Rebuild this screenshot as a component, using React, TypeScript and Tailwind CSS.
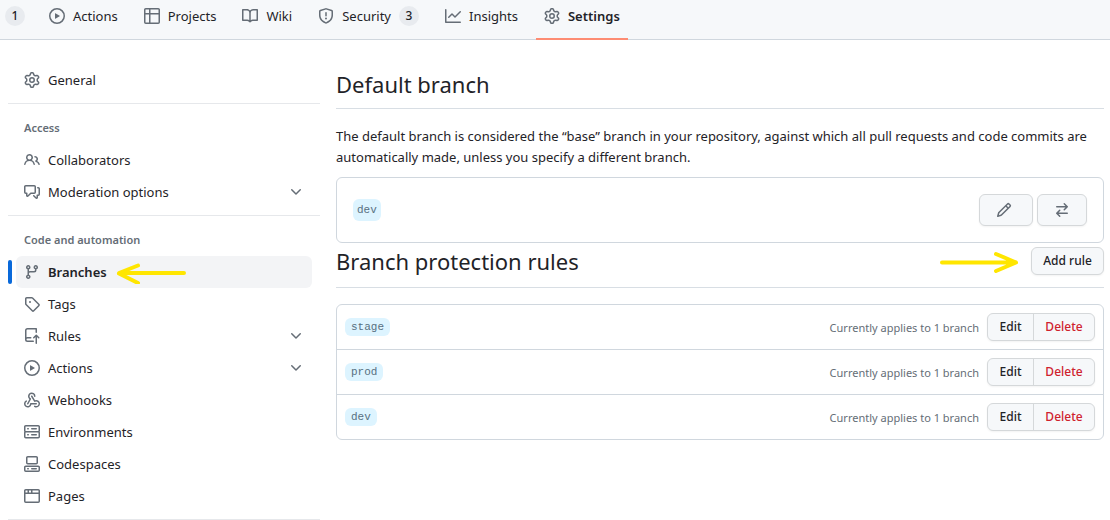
import type { ReactNode } from "react";

const icons = {
  play: "M8 0a8 8 0 1 1 0 16A8 8 0 0 1 8 0ZM1.5 8a6.5 6.5 0 1 0 13 0 6.5 6.5 0 0 0-13 0Zm4.879-2.773 4.264 2.559a.25.25 0 0 1 0 .428l-4.264 2.559A.25.25 0 0 1 6 10.559V5.442a.25.25 0 0 1 .379-.215Z",
  table: "M0 1.75C0 .784.784 0 1.75 0h12.5C15.216 0 16 .784 16 1.75v12.5A1.75 1.75 0 0 1 14.25 16H1.75A1.75 1.75 0 0 1 0 14.25ZM6.5 6.5v8h7.75a.25.25 0 0 0 .25-.25V6.5Zm8-1.5V1.75a.25.25 0 0 0-.25-.25H6.5V5Zm-13 1.5v7.75c0 .138.112.25.25.25H5v-8ZM5 5V1.5H1.75a.25.25 0 0 0-.25.25V5Z",
  book: "M0 1.75A.75.75 0 0 1 .75 1h4.253c1.227 0 2.317.59 3 1.501A3.743 3.743 0 0 1 11.006 1h4.245a.75.75 0 0 1 .75.75v10.5a.75.75 0 0 1-.75.75h-4.507a2.25 2.25 0 0 0-1.591.659l-.622.621a.75.75 0 0 1-1.06 0l-.622-.621A2.25 2.25 0 0 0 5.258 13H.75a.75.75 0 0 1-.75-.75Zm7.251 10.324.004-5.073-.002-2.253A2.25 2.25 0 0 0 5.003 2.5H1.5v9h3.757a3.75 3.75 0 0 1 1.994.574ZM8.755 4.75l-.004 7.322a3.752 3.752 0 0 1 1.992-.572H14.5v-9h-3.495a2.25 2.25 0 0 0-2.25 2.25Z",
  shield: "M7.467.133a1.748 1.748 0 0 1 1.066 0l5.25 1.68A1.75 1.75 0 0 1 15 3.48V7c0 1.566-.32 3.182-1.303 4.682-.983 1.498-2.585 2.813-5.032 3.855a1.697 1.697 0 0 1-1.33 0c-2.447-1.042-4.049-2.357-5.032-3.855C1.32 10.182 1 8.566 1 7V3.48a1.75 1.75 0 0 1 1.217-1.667Zm.61 1.429a.25.25 0 0 0-.153 0l-5.25 1.68a.25.25 0 0 0-.174.238V7c0 1.358.275 2.666 1.057 3.86.784 1.194 2.121 2.34 4.366 3.297a.196.196 0 0 0 .154 0c2.245-.956 3.582-2.104 4.366-3.298C13.225 9.666 13.5 8.36 13.5 7V3.48a.251.251 0 0 0-.174-.237l-5.25-1.68ZM8.75 4.75v3a.75.75 0 0 1-1.5 0v-3a.75.75 0 0 1 1.5 0ZM9 10.5a1 1 0 1 1-2 0 1 1 0 0 1 2 0Z",
  graph: "M1.5 1.75V13.5h13.75a.75.75 0 0 1 0 1.5H.75a.75.75 0 0 1-.75-.75V1.75a.75.75 0 0 1 1.5 0Zm14.28 2.53-5.25 5.25a.75.75 0 0 1-1.06 0L7 7.06 4.28 9.78a.751.751 0 0 1-1.042-.018.751.751 0 0 1-.018-1.042l3.25-3.25a.75.75 0 0 1 1.06 0L10 7.94l4.72-4.72a.751.751 0 0 1 1.042.018.751.751 0 0 1 .018 1.042Z",
  gear: "M8 0a8.2 8.2 0 0 1 .701.031C9.444.095 9.99.645 10.16 1.29l.288 1.107c.018.066.079.158.212.224.231.114.454.243.668.386.123.082.233.09.299.071l1.103-.303c.644-.176 1.392.021 1.82.63.27.385.506.792.704 1.218.315.675.111 1.422-.364 1.891l-.814.806c-.049.048-.098.147-.088.294.016.257.016.515 0 .772-.01.147.038.246.088.294l.814.806c.475.469.679 1.216.364 1.891a7.977 7.977 0 0 1-.704 1.217c-.428.61-1.176.807-1.82.63l-1.102-.302c-.067-.019-.177-.011-.3.071a5.909 5.909 0 0 1-.668.386c-.133.066-.194.158-.211.224l-.29 1.106c-.168.646-.715 1.196-1.458 1.26a8.006 8.006 0 0 1-1.402 0c-.743-.064-1.289-.614-1.458-1.26l-.289-1.106c-.018-.066-.079-.158-.212-.224a5.738 5.738 0 0 1-.668-.386c-.123-.082-.233-.09-.299-.071l-1.103.303c-.644.176-1.392-.021-1.82-.63a8.12 8.12 0 0 1-.704-1.218c-.315-.675-.111-1.422.363-1.891l.815-.806c.05-.048.098-.147.088-.294a6.214 6.214 0 0 1 0-.772c.01-.147-.038-.246-.088-.294l-.815-.806C.635 6.045.431 5.298.746 4.623a7.92 7.92 0 0 1 .704-1.217c.428-.61 1.176-.807 1.82-.63l1.102.302c.067.019.177.011.3-.071.214-.143.437-.272.668-.386.133-.066.194-.158.211-.224l.29-1.106C6.009.645 6.556.095 7.299.03 7.53.01 7.764 0 8 0Zm-.571 1.525c-.036.003-.108.036-.137.146l-.289 1.105c-.147.561-.549.967-.998 1.189-.173.086-.34.183-.5.29-.417.278-.97.423-1.529.27l-1.103-.303c-.109-.03-.175.016-.195.045-.22.312-.412.644-.573.99-.014.031-.021.11.059.19l.815.806c.411.406.562.957.53 1.456a4.709 4.709 0 0 0 0 .582c.032.499-.119 1.05-.53 1.456l-.815.806c-.081.08-.073.159-.059.19.162.346.353.677.573.989.02.03.085.076.195.046l1.102-.303c.56-.153 1.113-.008 1.53.27.161.107.328.204.501.29.447.222.85.629.997 1.189l.289 1.105c.029.109.101.143.137.146a6.6 6.6 0 0 0 1.142 0c.036-.003.108-.036.137-.146l.289-1.105c.147-.561.549-.967.998-1.189.173-.086.34-.183.5-.29.417-.278.97-.423 1.529-.27l1.103.303c.109.029.175-.016.195-.045.22-.313.411-.644.573-.99.014-.031.021-.11-.059-.19l-.815-.806c-.411-.406-.562-.957-.53-1.456a4.709 4.709 0 0 0 0-.582c-.032-.499.119-1.05.53-1.456l.815-.806c.081-.08.073-.159.059-.19a6.464 6.464 0 0 0-.573-.989c-.02-.03-.085-.076-.195-.046l-1.102.303c-.56.153-1.113.008-1.53-.27a4.44 4.44 0 0 0-.501-.29c-.447-.222-.85-.629-.997-1.189l-.289-1.105c-.029-.11-.101-.143-.137-.146a6.6 6.6 0 0 0-1.142 0ZM11 8a3 3 0 1 1-6 0 3 3 0 0 1 6 0ZM9.5 8a1.5 1.5 0 1 0-3.001.001A1.5 1.5 0 0 0 9.5 8Z",
  people: "M2 5.5a3.5 3.5 0 1 1 5.898 2.549 5.508 5.508 0 0 1 3.034 4.084.75.75 0 1 1-1.482.235 4 4 0 0 0-7.9 0 .75.75 0 0 1-1.482-.236A5.507 5.507 0 0 1 3.102 8.05 3.493 3.493 0 0 1 2 5.5ZM11 4a3.001 3.001 0 0 1 2.22 5.018 5.01 5.01 0 0 1 2.56 3.012.749.749 0 0 1-.885.954.752.752 0 0 1-.549-.514 3.507 3.507 0 0 0-2.522-2.372.75.75 0 0 1-.574-.73v-.352a.75.75 0 0 1 .416-.672A1.5 1.5 0 0 0 11 5.5.75.75 0 0 1 11 4Zm-5.5-.5a2 2 0 1 0-.001 3.999A2 2 0 0 0 5.5 3.5Z",
  discussion: "M1.75 1h8.5c.966 0 1.75.784 1.75 1.75v5.5A1.75 1.75 0 0 1 10.25 10H7.061l-2.574 2.573A1.458 1.458 0 0 1 2 11.543V10h-.25A1.75 1.75 0 0 1 0 8.25v-5.5C0 1.784.784 1 1.75 1ZM1.5 2.75v5.5c0 .138.112.25.25.25h1a.75.75 0 0 1 .75.75v2.19l2.72-2.72a.749.749 0 0 1 .53-.22h3.5a.25.25 0 0 0 .25-.25v-5.5a.25.25 0 0 0-.25-.25h-8.5a.25.25 0 0 0-.25.25Zm13 2a.25.25 0 0 0-.25-.25h-.5a.75.75 0 0 1 0-1.5h.5c.966 0 1.75.784 1.75 1.75v5.5A1.75 1.75 0 0 1 14.25 12H14v1.543a1.458 1.458 0 0 1-2.487 1.03L9.22 12.28a.749.749 0 0 1 .326-1.275.749.749 0 0 1 .734.215l2.22 2.22v-2.19a.75.75 0 0 1 .75-.75h1a.25.25 0 0 0 .25-.25Z",
  branch: "M9.5 3.25a2.25 2.25 0 1 1 3 2.122V6A2.5 2.5 0 0 1 10 8.5H6a1 1 0 0 0-1 1v1.128a2.251 2.251 0 1 1-1.5 0V5.372a2.25 2.25 0 1 1 1.5 0v1.836A2.493 2.493 0 0 1 6 7h4a1 1 0 0 0 1-1v-.628A2.25 2.25 0 0 1 9.5 3.25Zm-6 0a.75.75 0 1 0 1.5 0 .75.75 0 0 0-1.5 0Zm8.25-.75a.75.75 0 1 0 0 1.5.75.75 0 0 0 0-1.5ZM4.25 12a.75.75 0 1 0 0 1.5.75.75 0 0 0 0-1.5Z",
  tag: "M1 7.775V2.75C1 1.784 1.784 1 2.75 1h5.025c.464 0 .91.184 1.238.513l6.25 6.25a1.75 1.75 0 0 1 0 2.474l-5.026 5.026a1.75 1.75 0 0 1-2.474 0l-6.25-6.25A1.752 1.752 0 0 1 1 7.775Zm1.5 0c0 .066.026.13.073.177l6.25 6.25a.25.25 0 0 0 .354 0l5.025-5.025a.25.25 0 0 0 0-.354l-6.25-6.25a.25.25 0 0 0-.177-.073H2.75a.25.25 0 0 0-.25.25ZM6 5a1 1 0 1 1 0 2 1 1 0 0 1 0-2Z",
  push: "M1 2.5A2.5 2.5 0 0 1 3.5 0h8.75a.75.75 0 0 1 .75.75v3.5a.75.75 0 0 1-1.5 0V1.5h-8a1 1 0 0 0-1 1v6.708A2.493 2.493 0 0 1 3.5 9h3.25a.75.75 0 0 1 0 1.5H3.5a1 1 0 0 0 0 2h5.75a.75.75 0 0 1 0 1.5H3.5A2.5 2.5 0 0 1 1 11.5Zm13.23 7.79h-.001l-1.224-1.224v6.184a.75.75 0 0 1-1.5 0V9.066L10.28 10.29a.75.75 0 0 1-1.06-1.061l2.505-2.504a.75.75 0 0 1 1.06 0L15.29 9.23a.751.751 0 0 1-.018 1.042.751.751 0 0 1-1.042.018Z",
  webhook: "M5.5 4.25a2.25 2.25 0 0 1 4.5 0 .75.75 0 0 0 1.5 0 3.75 3.75 0 1 0-6.14 2.889l-2.272 4.258a.75.75 0 0 0 1.324.706L7 7.25a.75.75 0 0 0-.309-1.015A2.25 2.25 0 0 1 5.5 4.25ZM7.364 3.607a.75.75 0 0 1 1.03.257l2.608 4.349a3.75 3.75 0 1 1-.628 6.785.75.75 0 0 1 .752-1.299 2.25 2.25 0 1 0-.033-3.88.75.75 0 0 1-1.03-.256L7.107 4.636a.75.75 0 0 1 .257-1.03ZM2.9 8.776A.75.75 0 0 1 2.625 9.8 2.25 2.25 0 1 0 6 11.75a.75.75 0 0 1 .75-.751h5.5a.75.75 0 0 1 0 1.5H7.425a3.751 3.751 0 1 1-5.55-3.998.75.75 0 0 1 1.024.274Z",
  server: "M1.75 1h12.5c.966 0 1.75.784 1.75 1.75v4c0 .372-.116.717-.314 1 .198.283.314.628.314 1v4a1.75 1.75 0 0 1-1.75 1.75H1.75A1.75 1.75 0 0 1 0 12.75v-4c0-.358.109-.707.314-1a1.739 1.739 0 0 1-.314-1v-4C0 1.784.784 1 1.75 1ZM1.5 2.75v4c0 .138.112.25.25.25h12.5a.25.25 0 0 0 .25-.25v-4a.25.25 0 0 0-.25-.25H1.75a.25.25 0 0 0-.25.25Zm.25 5.75a.25.25 0 0 0-.25.25v4c0 .138.112.25.25.25h12.5a.25.25 0 0 0 .25-.25v-4a.25.25 0 0 0-.25-.25ZM7 4.75A.75.75 0 0 1 7.75 4h4.5a.75.75 0 0 1 0 1.5h-4.5A.75.75 0 0 1 7 4.75ZM7.75 10h4.5a.75.75 0 0 1 0 1.5h-4.5a.75.75 0 0 1 0-1.5ZM3 4.75A.75.75 0 0 1 3.75 4h.5a.75.75 0 0 1 0 1.5h-.5A.75.75 0 0 1 3 4.75ZM3.75 10h.5a.75.75 0 0 1 0 1.5h-.5a.75.75 0 0 1 0-1.5Z",
  codespaces: "M0 11.25c0-.966.784-1.75 1.75-1.75h12.5c.966 0 1.75.784 1.75 1.75v3A1.75 1.75 0 0 1 14.25 16H1.75A1.75 1.75 0 0 1 0 14.25Zm2-9.5C2 .784 2.784 0 3.75 0h8.5C13.216 0 14 .784 14 1.75v5a1.75 1.75 0 0 1-1.75 1.75h-8.5A1.75 1.75 0 0 1 2 6.75Zm1.75-.25a.25.25 0 0 0-.25.25v5c0 .138.112.25.25.25h8.5a.25.25 0 0 0 .25-.25v-5a.25.25 0 0 0-.25-.25Zm-2 9.5a.25.25 0 0 0-.25.25v3c0 .138.112.25.25.25h12.5a.25.25 0 0 0 .25-.25v-3a.25.25 0 0 0-.25-.25ZM7 12.75a.75.75 0 0 1 .75-.75h4.5a.75.75 0 0 1 0 1.5h-4.5a.75.75 0 0 1-.75-.75Zm-4 0a.75.75 0 0 1 .75-.75h.5a.75.75 0 0 1 0 1.5h-.5a.75.75 0 0 1-.75-.75Z",
  browser: "M0 2.75C0 1.784.784 1 1.75 1h12.5c.966 0 1.75.784 1.75 1.75v10.5A1.75 1.75 0 0 1 14.25 15H1.75A1.75 1.75 0 0 1 0 13.25ZM14.5 6h-13v7.25c0 .138.112.25.25.25h12.5a.25.25 0 0 0 .25-.25Zm-6-3.5v2h6V2.75a.25.25 0 0 0-.25-.25ZM5 2.5v2h2v-2Zm-3.25 0a.25.25 0 0 0-.25.25V4.5h2v-2Z",
  pencil: "M11.013 1.427a1.75 1.75 0 0 1 2.474 0l1.086 1.086a1.75 1.75 0 0 1 0 2.474l-8.61 8.61c-.21.21-.47.364-.756.445l-3.251.93a.75.75 0 0 1-.927-.928l.929-3.25c.081-.286.235-.547.445-.758l8.61-8.61Zm.176 4.823L9.75 4.81l-6.286 6.287a.253.253 0 0 0-.064.108l-.558 1.953 1.953-.558a.253.253 0 0 0 .108-.064Zm1.238-3.763a.25.25 0 0 0-.354 0L10.811 3.75l1.439 1.44 1.263-1.263a.25.25 0 0 0 0-.354Z",
  swap: "M5.22 14.78a.75.75 0 0 0 1.06-1.06L4.56 12h8.69a.75.75 0 0 0 0-1.5H4.56l1.72-1.72a.75.75 0 0 0-1.06-1.06l-3 3a.75.75 0 0 0 0 1.06l3 3Zm5.56-6.5a.75.75 0 1 1-1.06-1.06l1.72-1.72H2.75a.75.75 0 0 1 0-1.5h8.69L9.72 2.28a.75.75 0 0 1 1.06-1.06l3 3a.75.75 0 0 1 0 1.06l-3 3Z",
  chevron: "M12.78 5.22a.749.749 0 0 1 0 1.06l-4.25 4.25a.749.749 0 0 1-1.06 0L3.22 6.28a.749.749 0 1 1 1.06-1.06L8 8.939l3.72-3.719a.749.749 0 0 1 1.06 0Z",
};

type IconName = keyof typeof icons;

function Icon({ name }: { name: IconName }) {
  return (
    <svg viewBox="0 0 16 16" className="size-4 shrink-0 fill-[#656d76]" aria-hidden="true">
      <path d={icons[name]} />
    </svg>
  );
}

function Counter({ children }: { children: ReactNode }) {
  return (
    <span className="flex h-5 min-w-5 items-center justify-center rounded-full bg-[#e8ebef] px-1.5 text-xs font-medium">
      {children}
    </span>
  );
}

type Tab = { label: string; icon: IconName; count?: number; current?: boolean };

const tabs: Tab[] = [
  { label: "Actions", icon: "play" },
  { label: "Projects", icon: "table" },
  { label: "Wiki", icon: "book" },
  { label: "Security", icon: "shield", count: 3 },
  { label: "Insights", icon: "graph" },
  { label: "Settings", icon: "gear", current: true },
];

function TabLink({ label, icon, count, current }: Tab) {
  return (
    <a
      href="#"
      aria-current={current ? "page" : undefined}
      className={
        current
          ? "-mb-px flex items-center gap-2 border-b-2 border-[#fd8c73] px-2 pb-1.5 font-semibold"
          : "-mb-px flex items-center gap-2 px-2 pb-2"
      }
    >
      <Icon name={icon} />
      <span className="pt-0.5">{label}</span>
      {count !== undefined && <Counter>{count}</Counter>}
    </a>
  );
}

type NavItem = { label: string; icon: IconName; expandable?: boolean; current?: boolean };

const groups: { title?: string; items: NavItem[] }[] = [
  { items: [{ label: "General", icon: "gear" }] },
  {
    title: "Access",
    items: [
      { label: "Collaborators", icon: "people" },
      { label: "Moderation options", icon: "discussion", expandable: true },
    ],
  },
  {
    title: "Code and automation",
    items: [
      { label: "Branches", icon: "branch", current: true },
      { label: "Tags", icon: "tag" },
      { label: "Rules", icon: "push", expandable: true },
      { label: "Actions", icon: "play", expandable: true },
      { label: "Webhooks", icon: "webhook" },
      { label: "Environments", icon: "server" },
      { label: "Codespaces", icon: "codespaces" },
      { label: "Pages", icon: "browser" },
    ],
  },
];

function SideItem({ label, icon, expandable, current }: NavItem) {
  if (expandable) {
    return (
      <button type="button" aria-expanded="false" className="flex h-8 w-full items-center gap-2 rounded-md px-2">
        <Icon name={icon} />
        <span className="flex-1 pt-0.5 text-left">{label}</span>
        <Icon name="chevron" />
      </button>
    );
  }
  if (current) {
    return (
      <a
        href="#"
        aria-current="page"
        className="relative flex h-8 items-center gap-2 rounded-md bg-[#f3f4f6] px-2 font-semibold"
      >
        <span className="absolute top-1 -left-2 h-6 w-1 rounded-md bg-[#0969da]" />
        <Icon name={icon} />
        <span className="pt-0.5">{label}</span>
        <svg
          viewBox="0 0 72 24"
          className="absolute top-1 left-[100px] h-6 w-[72px] fill-none stroke-[#ffe600] stroke-4"
          strokeLinecap="round"
          strokeLinejoin="round"
          aria-hidden="true"
        >
          <path d="M68 13H3L22 5.500M3 13.500L22 23" />
        </svg>
      </a>
    );
  }
  return (
    <a href="#" className="flex h-8 items-center gap-2 rounded-md px-2">
      <Icon name={icon} />
      <span className="pt-0.5">{label}</span>
    </a>
  );
}

function Sidebar() {
  return (
    <nav aria-label="Settings" className="w-[312px] shrink-0">
      {groups.map((group, i) => (
        <section key={i} className="mb-2 border-b border-[#e6e8eb] pr-2 pb-[7px] pl-2">
          {group.title && (
            <h3 className="flex h-8 items-center px-2 text-[11px] font-semibold text-[#656d76]">{group.title}</h3>
          )}
          <ul>
            {group.items.map((item) => (
              <li key={item.label}>
                <SideItem {...item} />
              </li>
            ))}
          </ul>
        </section>
      ))}
    </nav>
  );
}

const rules = ["stage", "prod", "dev"];

export default function App() {
  return (
    <div className="min-h-screen overflow-x-hidden bg-white font-['Noto_Sans','Open_Sans',sans-serif] text-[13px] text-[#1f2328]">
      <header className="border-b border-[#d0d7de] bg-[#f6f8fa]">
        <nav aria-label="Repository" className="flex h-[39px] gap-2.5 pl-[5px]">
          <a href="#" className="flex items-center pr-1.5 pb-[7px]">
            <Counter>1</Counter>
          </a>
          {tabs.map((tab) => (
            <TabLink key={tab.label} {...tab} />
          ))}
        </nav>
      </header>

      <div className="flex gap-4 pt-6 pr-1.5 pl-2">
        <Sidebar />
        <main className="min-w-0 flex-1">
          <h2 className="border-b border-[#d8dee4] pt-1 pb-2 text-[22px] leading-8">Default branch</h2>
          <p className="mt-[17px] leading-[21px]">
            The default branch is considered the “base” branch in your repository, against which all pull requests and
            code commits are automatically made, unless you specify a different branch.
          </p>

          <div className="mt-[9px] flex items-center gap-1 rounded-md border border-[#d0d7de] p-4">
            <span className="mr-auto rounded-md bg-[#ddf4ff] px-1 py-px font-['Liberation_Mono',monospace] text-[11px] leading-5 text-[#57707f]">
              dev
            </span>
            <button
              type="button"
              aria-label="Rename branch"
              className="flex h-8 w-[54px] items-center justify-center rounded-md border border-[#d5d8da] bg-[#f6f8fa] pr-1 shadow-xs"
            >
              <Icon name="pencil" />
            </button>
            <button
              type="button"
              aria-label="Switch to another branch"
              className="flex h-8 w-[50px] items-center justify-center rounded-md border border-[#d5d8da] bg-[#f6f8fa] shadow-xs"
            >
              <Icon name="swap" />
            </button>
          </div>

          <div className="flex items-center border-b border-[#d8dee4] pt-1 pb-3">
            <h2 className="mr-auto text-[22px] leading-7">Branch protection rules</h2>
            <svg
              viewBox="0 0 80 24"
              className="mr-3 h-6 w-20 fill-none stroke-[#ffe600] stroke-4"
              strokeLinecap="round"
              strokeLinejoin="round"
              aria-hidden="true"
            >
              <path d="M3 13.500H77L57 5M77 13.500L57 22" />
            </svg>
            <button
              type="button"
              className="h-7 w-[73px] rounded-md border border-[#d5d8da] bg-[#f6f8fa] text-xs font-medium shadow-xs"
            >
              Add rule
            </button>
          </div>

          <ul className="mt-4 divide-y divide-[#d0d7de] rounded-md border border-[#d0d7de]">
            {rules.map((rule) => (
              <li key={rule} className="flex items-center p-2">
                <span className="mr-auto rounded-md bg-[#ddf4ff] px-1.5 font-['Liberation_Mono',monospace] text-[11px] leading-[18px] text-[#57707f]">
                  {rule}
                </span>
                <span className="mr-2 pt-0.5 text-[11px] text-[#656d76]">Currently applies to 1 branch</span>
                <div className="flex h-7 divide-x divide-[#d5d8da] rounded-md border border-[#d5d8da] bg-[#f6f8fa] text-xs font-medium shadow-xs">
                  <button type="button" className="w-[46px]">
                    Edit
                  </button>
                  <button type="button" className="w-[60px] text-[#cf222e]">
                    Delete
                  </button>
                </div>
              </li>
            ))}
          </ul>
        </main>
      </div>
    </div>
  );
}
